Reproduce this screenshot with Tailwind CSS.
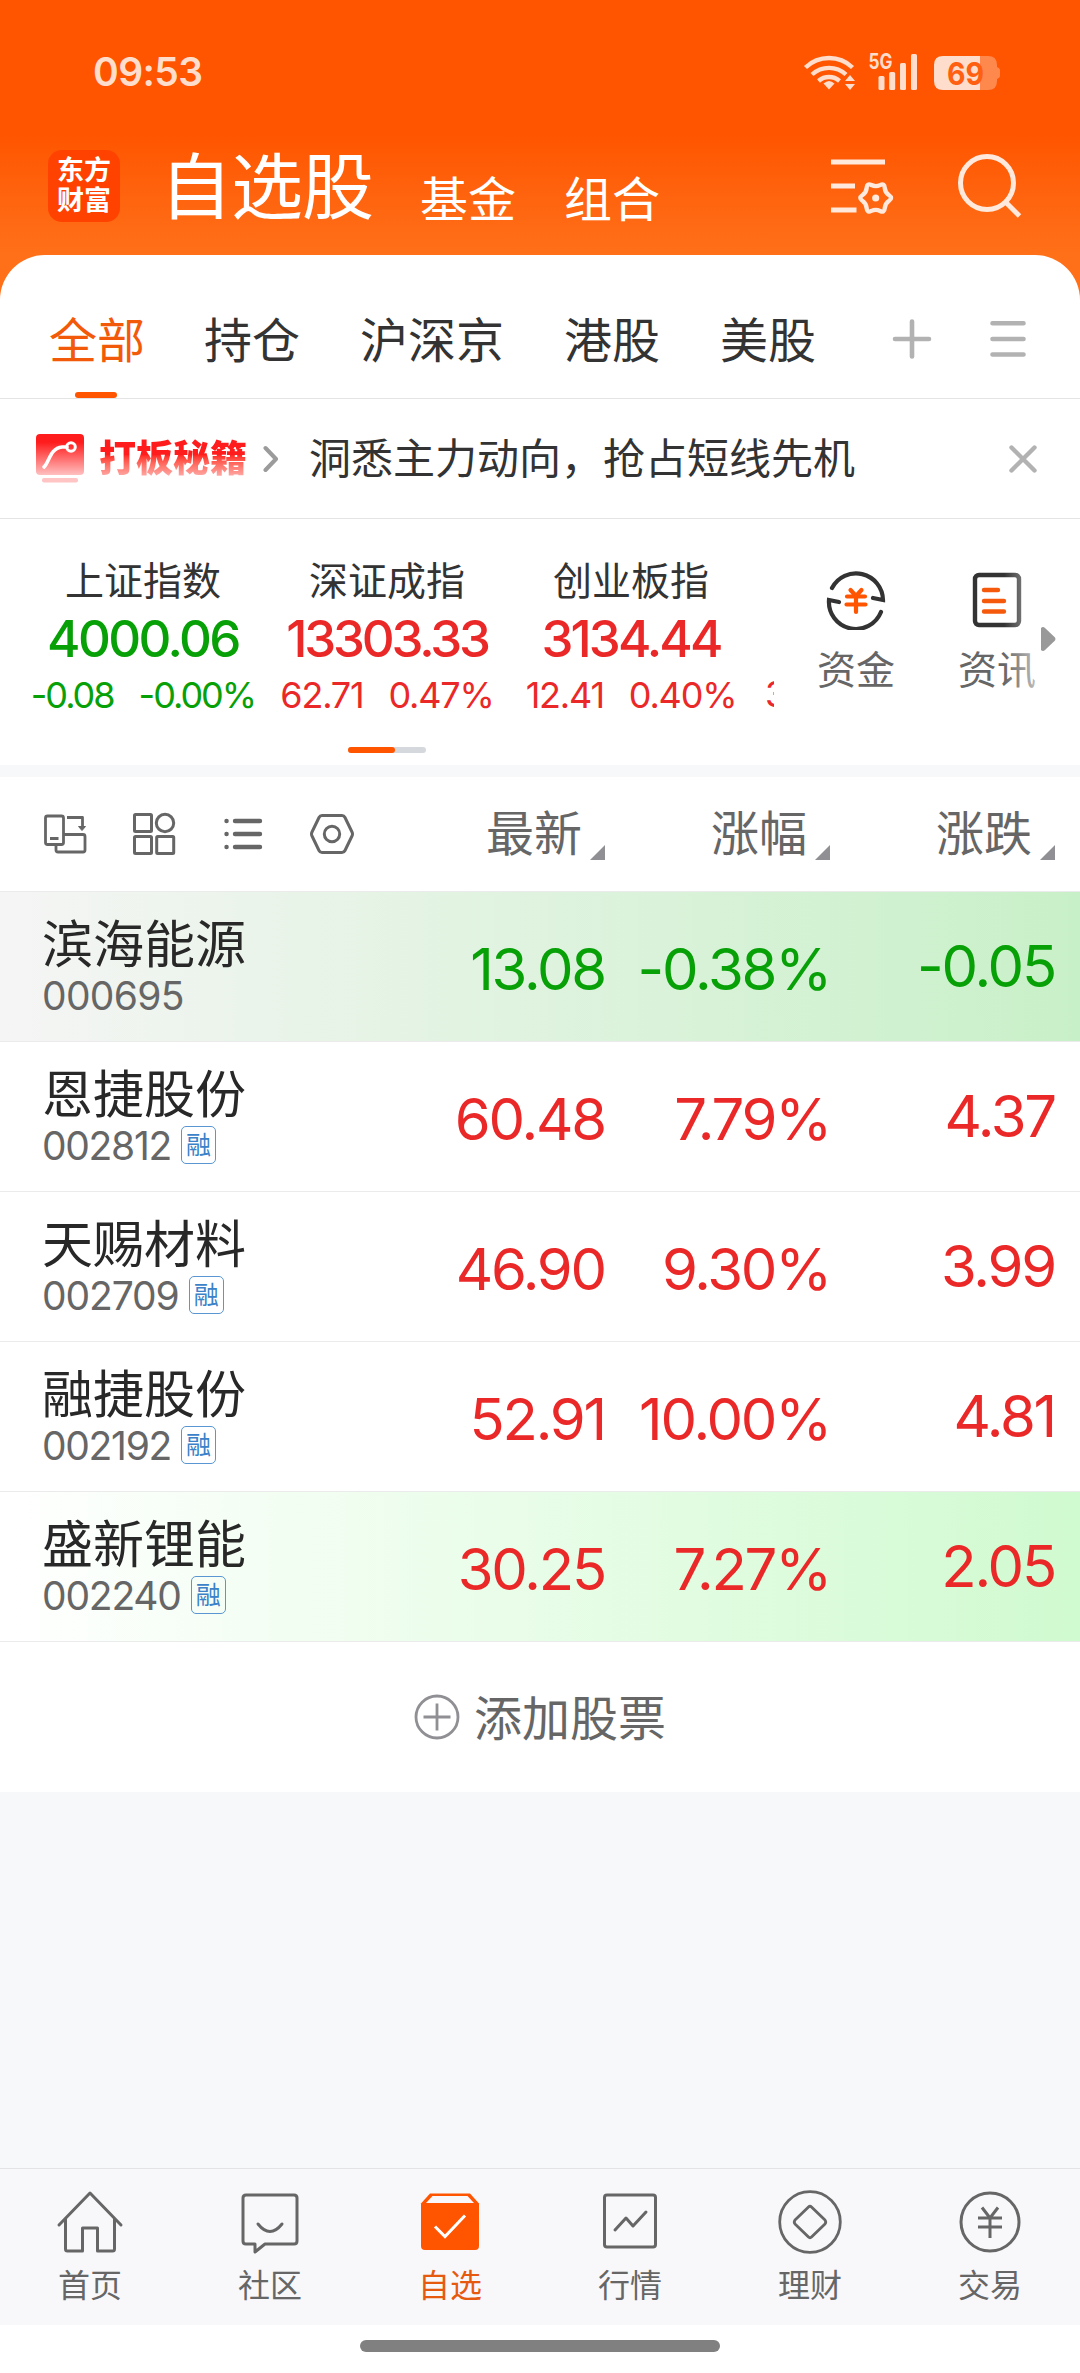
<!DOCTYPE html>
<html lang="zh-CN">
<head>
  <meta charset="UTF-8" />
  <meta name="viewport" content="width=device-width, initial-scale=1.0" />
  <title>自选股</title>
  <script src="https://cdn.jsdelivr.net/npm/@tailwindcss/browser@4"></script>
  <style>
    body {
      font-family: 'Inter', 'Noto Sans CJK SC', sans-serif;
    }
  </style>
</head>

<body class="w-[1080px] h-[2373px] overflow-hidden bg-[#f7f8fa] text-[#333] whitespace-nowrap leading-none">
  <div class="flex flex-col h-full">

    <!-- 顶部 -->
    <header class="h-[300px] -mb-[45px] bg-linear-to-b from-[#ff5500] from-45% to-[#ff7018] to-85%">
      <div class="h-[142px] pl-[93px] pr-[79px] flex items-center justify-between">
        <span class="text-[39px] font-semibold text-[#ffddcc] tracking-[-0.6px]">09:53</span>
        <svg width="198" height="40" viewBox="803 51 198 40" fill="none">
          <g stroke="#ffddcc" stroke-width="4.4">
            <path d="M805.5 67.5a34 34 0 0 1 47 0" />
            <path d="M812 74.5a25 25 0 0 1 34 0" />
            <path d="M818.500 81a16 16 0 0 1 21 0" />
          </g>
          <path d="M823.500 83.500q5.500-5 11 0l-5.500 6z" fill="#ffddcc" />
          <path d="M845 81l5-6 5 6zM845 84h10l-5 6z" fill="#ffddcc" />
          <text x="868.500" y="69" font-size="21" font-weight="700" textLength="24" lengthAdjust="spacingAndGlyphs" fill="#ffddcc">5G</text>
          <g fill="#ffddcc">
            <rect x="878.500" y="76" width="6" height="14" rx="1.500" />
            <rect x="889.200" y="72" width="6" height="18" rx="1.500" />
            <rect x="900" y="63" width="6" height="27" rx="1.500" />
            <rect x="911" y="54" width="6" height="36" rx="1.500" />
          </g>
          <path d="M980 56h8q9 0 9 9v2q3 1 3 3v6q0 2-3 3v2q0 9-9 9h-8z" fill="#ff884d" />
          <path d="M980 56h-37q-9 0-9 9v16q0 9 9 9h37z" fill="#ffddcc" />
          <text x="947" y="84.500" font-size="31" font-weight="700" textLength="37" lengthAdjust="spacingAndGlyphs" fill="#ff5f10">69</text>
        </svg>
      </div>
      <div class="h-[88px] pl-12 pr-[58px] flex items-center">
        <div class="w-[72px] h-[72px] rounded-[14px] bg-[#ff4200] text-white text-[27px] font-bold flex flex-col items-center justify-center leading-[30px]">
          <span>东方</span>
          <span>财富</span>
        </div>
        <h1 class="ml-[40px] mt-[2px] text-[72px] tracking-[-1px] text-white">自选股</h1>
        <span class="ml-[47px] mt-[28px] text-[48px] text-white">基金</span>
        <span class="ml-[48px] mt-[28px] text-[48px] text-white">组合</span>
        <svg class="ml-auto" width="64" height="60" viewBox="831 157 64 60" fill="none" stroke="#ffe9dc" stroke-width="5">
          <path d="M831 163h54M831 187h24M831 211h25.500" />
          <g transform="translate(875.700 199) scale(.94)">
            <path stroke-width="4.600" d="M14.230-2.880Q18.500 0 14.230 2.880Q9.960 5.750 9.600 10.900Q9.250 16.020 4.600 13.760Q0 11.500-4.600 13.760Q-9.250 16.020-9.600 10.900Q-9.960 5.750-14.230 2.880Q-18.500 0-14.230-2.880Q-9.960-5.750-9.600-10.900Q-9.250-16.020-4.600-13.760Q0-11.500 4.600-13.760Q9.250-16.020 9.600-10.900Q9.960-5.750 14.230-2.880Z" />
            <circle r="3.800" fill="#ffe9dc" stroke="none" />
          </g>
        </svg>
        <svg class="ml-[61px]" width="66" height="66" viewBox="956 154 66 66" fill="none" stroke="#ffe9dc" stroke-width="5">
          <circle cx="987" cy="184" r="26.500" />
          <path d="M1005.500 203l14 14" />
        </svg>
      </div>
    </header>

    <main class="bg-white rounded-t-[45px]">
      <!-- 分组 -->
      <nav class="h-[144px] pt-[25px] pl-[49px] pr-[54px] border-b border-[#e4e4e4] flex text-[48px]">
        <div class="relative h-[118px] pt-[3px] flex items-center text-[#f25a0a]">全部
          <i class="absolute left-[26px] bottom-0 w-[42px] h-[6px] rounded-full bg-[#ff5500]"></i>
        </div>
        <span class="h-[118px] pt-[3px] ml-[59px] flex items-center">持仓</span>
        <span class="h-[118px] pt-[3px] ml-[60px] flex items-center">沪深京</span>
        <span class="h-[118px] pt-[3px] ml-[60px] flex items-center">港股</span>
        <span class="h-[118px] pt-[3px] ml-[60px] flex items-center">美股</span>
        <svg class="ml-auto mt-[39px]" width="40" height="40" viewBox="-20 -20 40 40" stroke="#b2b2b2" stroke-width="4.600" stroke-linecap="round">
          <path d="M-17 0h34M0-17.500v35" />
        </svg>
        <svg class="ml-[58px] mt-[39px]" width="36" height="40" viewBox="0 -20 36 40" stroke="#b2b2b2" stroke-width="4.600" stroke-linecap="round">
          <path d="M2.500-15.800h31M2.500 0h31M2.500 15.500h31" />
        </svg>
      </nav>

      <!-- 广告条 -->
      <section class="h-[120px] pl-9 pr-[43px] border-b border-[#e4e4e4] flex items-center">
        <svg width="48" height="50" viewBox="36 434 48 50" fill="none">
          <defs>
            <linearGradient id="red" x1="0" y1="0" x2="0" y2="1">
              <stop offset=".2" stop-color="#ff1c1c" />
              <stop offset="1" stop-color="#ffc0c0" />
            </linearGradient>
          </defs>
          <rect x="36" y="434" width="48" height="41" rx="4" fill="url(#red)" />
          <path d="M44 467c5-4 6-19 18-20h5" stroke="#fff" stroke-width="3.600" stroke-linecap="round" />
          <circle cx="71" cy="447" r="4.300" stroke="#fff" stroke-width="3" />
          <rect x="42" y="478" width="36" height="4.500" rx="2" fill="#ffc4c4" />
        </svg>
        <span class="ml-[15px] text-[37px] leading-[44px] font-black text-transparent bg-clip-text bg-linear-to-b from-[#ff1c1c] from-40% to-[#ffb4b4] to-95%">打板秘籍</span>
        <svg class="ml-[16px]" width="16" height="30" viewBox="0 0 16 30" fill="none" stroke="#9b9b9b" stroke-width="4" stroke-linecap="round" stroke-linejoin="round">
          <path d="M2.500 4l10.500 11-10.500 11" />
        </svg>
        <span class="ml-[30px] text-[42px]">洞悉主力动向，抢占短线先机</span>
        <svg class="ml-auto" width="28" height="30" viewBox="0 0 28 30" stroke="#b2b2b2" stroke-width="4.400" stroke-linecap="round">
          <path d="M2.500 3.500l23 23M25.500 3.500l-23 23" />
        </svg>
      </section>

      <!-- 指数 -->
      <section class="relative h-[246px] flex">
        <div class="w-[774px] pl-[21px] flex overflow-hidden text-[#eb2828]">
          <div class="w-[244px] shrink-0 flex flex-col items-center text-[#07a007]">
            <span class="mt-[42px] text-[39px] text-[#333]">上证指数</span>
            <b class="mt-[13px] text-[51px] font-medium tracking-[-2.600px]">4000.06</b>
            <p class="mt-[13px] flex gap-[25px] text-[36px] tracking-[-2px]"><span>-0.08</span><span>-0.00%</span></p>
          </div>
          <div class="w-[244px] shrink-0 flex flex-col items-center">
            <span class="mt-[42px] text-[39px] text-[#333]">深证成指</span>
            <b class="mt-[13px] text-[51px] font-medium tracking-[-3.200px]">13303.33</b>
            <p class="mt-[13px] flex gap-[25px] text-[36px] tracking-[-1.200px]"><span>62.71</span><span>0.47%</span></p>
          </div>
          <div class="w-[244px] shrink-0 flex flex-col items-center">
            <span class="mt-[42px] text-[39px] text-[#333]">创业板指</span>
            <b class="mt-[13px] text-[51px] font-medium tracking-[-2.900px]">3134.44</b>
            <p class="mt-[13px] flex gap-[25px] text-[36px] tracking-[-1.200px]"><span>12.41</span><span>0.40%</span></p>
          </div>
          <span class="ml-[12px] mt-[157px] shrink-0 text-[36px]">3</span>
        </div>
        <div class="w-[164px] pt-[51px] flex flex-col items-center text-[39px] text-[#666]">
          <svg width="60" height="60" viewBox="-30 -30 60 60" fill="none" stroke="#333" stroke-width="4.200">
            <path d="M-24-12A27 27 0 0 1 27 0L17-2" stroke-linecap="round" />
            <path d="M25 12A27 27 0 0 1-27 0L-17 2" stroke-linecap="round" />
            <path d="M-5.500-10L0-4l5.500-6M-9-3.500h18M-9.500 4.500h19M0-4v16" stroke="#ff5500" stroke-linecap="round" />
          </svg>
          <span class="mt-[20px]">资金</span>
        </div>
        <div class="w-[118px] pt-[51px] flex flex-col items-center text-[39px] text-[#666]">
          <svg width="60" height="60" viewBox="-30 -30 60 60" fill="none" stroke="#333" stroke-width="4.400" stroke-linecap="round">
            <rect x="-22" y="-25" width="44" height="50" rx="4" />
            <path d="M-13-10h14M-13 1h20M-13 11.500h20" stroke="#f55a0c" />
          </svg>
          <span class="mt-[20px]">资讯</span>
        </div>
        <i class="absolute left-[1004px] top-[40px] w-[34px] h-[150px] bg-linear-to-r from-white/0 to-white/60"></i>
        <svg class="absolute left-[1041px] top-[107px]" width="15" height="26" viewBox="0 0 15 26" fill="#999">
          <path d="M0 2Q2 0 4 2L14 11.500Q15 13 14 14.500L4 24Q2 26 0 24Z" />
        </svg>
        <div class="absolute left-[348px] top-[228px] w-[78px] h-[6px] rounded-full bg-[#d5d8dc]">
          <div class="w-[47px] h-[6px] rounded-full bg-[#ff5500]"></div>
        </div>
      </section>

      <div class="h-3 bg-[#f7f8fa]"></div>

      <!-- 表头 -->
      <section class="h-[114px] pl-[43px] flex items-center text-[48px] text-[#666]">
        <div class="w-[443px] flex items-center">
          <svg width="44" height="44" viewBox="43 812 44 44" fill="none" stroke="#666" stroke-width="2.800" stroke-linejoin="round">
            <rect x="45.500" y="816" width="18" height="28.500" rx="2" />
            <path d="M50 838.500h8.500M64 834.500h19q2 0 2 2v13.500q0 2-2 2h-25q-2 0-2-2v-5M67 817.500h15.500v10" />
            <path d="M78.500 826.500h7l-3.500 4z" fill="#666" stroke-width="1" />
          </svg>
          <svg class="ml-[45px]" width="44" height="44" viewBox="132 812 44 44" fill="none" stroke="#666" stroke-width="3">
            <rect x="134.500" y="814.500" width="17" height="17" rx="1" />
            <circle cx="165" cy="823" r="8.700" />
            <rect x="134.500" y="836.500" width="17" height="17" rx="1" />
            <rect x="156.700" y="836.500" width="17" height="17" rx="1" />
          </svg>
          <svg class="ml-[47px]" width="40" height="44" viewBox="223 812 40 44" stroke="#666" stroke-width="4.400" stroke-linecap="round">
            <path d="M226.500 821h.1M226.500 834h.1M226.500 847h.1M235 821h25M235 834h25M235 847h25" />
          </svg>
          <svg class="ml-[47px]" width="44" height="44" viewBox="310 812 44 44" fill="none" stroke="#666" stroke-width="3" stroke-linejoin="round">
            <path d="M322 815.500h20q2 0 3 2l7 14.500q1 2 0 4l-7 14.500q-1 2-3 2h-20q-2 0-3-2l-7-14.500q-1-2 0-4l7-14.500q1-2 3-2z" />
            <circle cx="332" cy="834" r="7.700" />
          </svg>
        </div>
        <div class="w-[225px] flex items-center gap-[8px]">最新<svg class="mt-[36px]" width="15" height="15" fill="#8f8f94"><path d="M15 0v15H0z" /></svg></div>
        <div class="w-[225px] flex items-center gap-[8px]">涨幅<svg class="mt-[36px]" width="15" height="15" fill="#8f8f94"><path d="M15 0v15H0z" /></svg></div>
        <div class="flex items-center gap-[8px]">涨跌<svg class="mt-[36px]" width="15" height="15" fill="#8f8f94"><path d="M15 0v15H0z" /></svg></div>
      </section>

      <!-- 股票列表 -->
      <ul class="text-[58px] tracking-[-2.200px] text-[#eb2828] border-t border-[#ebebeb]">
        <li class="h-[150px] pl-[42px] pr-[25px] border-b border-[#ebebeb] grid grid-cols-[338px_225px_225px_225px] items-center text-right text-[#07a007] bg-linear-to-r from-[#f5f5f5] to-[#c8f0c8]">
          <div class="text-left text-[#282828]">
            <p class="text-[51px] tracking-[0px]">滨海能源</p>
            <p class="mt-[6px] h-[38px] flex items-center text-[39px] tracking-[-0.700px] text-[#666]">000695</p>
          </div>
          <span class="pt-[4px]">13.08</span><span class="pt-[4px]">-0.38%</span><span class="-mt-[2px]">-0.05</span>
        </li>
        <li class="h-[150px] pl-[42px] pr-[25px] border-b border-[#ebebeb] grid grid-cols-[338px_225px_225px_225px] items-center text-right">
          <div class="text-left text-[#282828]">
            <p class="text-[51px] tracking-[0px]">恩捷股份</p>
            <p class="mt-[6px] h-[38px] flex items-center text-[39px] tracking-[-1.300px] text-[#666]">002812<span class="ml-[10px] w-[35px] h-[38px] border border-[#5a96d2] rounded-[5px] flex items-center justify-center text-[25px] tracking-[0px] text-[#3c82c8]">融</span></p>
          </div>
          <span class="pt-[4px]">60.48</span><span class="pt-[4px]">7.79%</span><span class="-mt-[2px]">4.37</span>
        </li>
        <li class="h-[150px] pl-[42px] pr-[25px] border-b border-[#ebebeb] grid grid-cols-[338px_225px_225px_225px] items-center text-right">
          <div class="text-left text-[#282828]">
            <p class="text-[51px] tracking-[0px]">天赐材料</p>
            <p class="mt-[6px] h-[38px] flex items-center text-[39px] tracking-[-1.100px] text-[#666]">002709<span class="ml-[10px] w-[35px] h-[38px] border border-[#5a96d2] rounded-[5px] flex items-center justify-center text-[25px] tracking-[0px] text-[#3c82c8]">融</span></p>
          </div>
          <span class="pt-[4px]">46.90</span><span class="pt-[4px]">9.30%</span><span class="-mt-[2px]">3.99</span>
        </li>
        <li class="h-[150px] pl-[42px] pr-[25px] border-b border-[#ebebeb] grid grid-cols-[338px_225px_225px_225px] items-center text-right">
          <div class="text-left text-[#282828]">
            <p class="text-[51px] tracking-[0px]">融捷股份</p>
            <p class="mt-[6px] h-[38px] flex items-center text-[39px] tracking-[-1.300px] text-[#666]">002192<span class="ml-[10px] w-[35px] h-[38px] border border-[#5a96d2] rounded-[5px] flex items-center justify-center text-[25px] tracking-[0px] text-[#3c82c8]">融</span></p>
          </div>
          <span class="pt-[4px]">52.91</span><span class="pt-[4px]">10.00%</span><span class="-mt-[2px]">4.81</span>
        </li>
        <li class="h-[150px] pl-[42px] pr-[25px] border-b border-[#ebebeb] grid grid-cols-[338px_225px_225px_225px] items-center text-right bg-linear-to-r from-white to-[#d0fad0]">
          <div class="text-left text-[#282828]">
            <p class="text-[51px] tracking-[0px]">盛新锂能</p>
            <p class="mt-[6px] h-[38px] flex items-center text-[39px] tracking-[-1.200px] text-[#666]">002240<span class="ml-[10px] w-[35px] h-[38px] border border-[#5a96d2] rounded-[5px] flex items-center justify-center text-[25px] tracking-[0px] text-[#3c82c8]">融</span></p>
          </div>
          <span class="pt-[4px]">30.25</span><span class="pt-[4px]">7.27%</span><span class="-mt-[2px]">2.05</span>
        </li>
      </ul>

      <button class="w-full h-[150px] flex items-center justify-center gap-[14px] text-[48px] text-[#666]">
        <svg width="46" height="46" viewBox="-23 -23 46 46" fill="none" stroke="#8f8f94" stroke-width="2.800">
          <circle r="21" />
          <path d="M-13.500 0h27M0-13.500v27" />
        </svg>
        <span class="pt-[3px]">添加股票</span>
      </button>
    </main>

    <!-- 底部导航 -->
    <footer class="mt-auto">
      <nav class="h-[157px] border-t border-[#e2e3e5] bg-[#f8f8fb] grid grid-cols-6 text-[32px] text-[#666] text-center">
        <div class="pt-[20px] flex flex-col items-center">
          <svg width="68" height="68" viewBox="-34 -32 68 68" fill="none" stroke="#666" stroke-width="3" stroke-linejoin="round" stroke-linecap="round">
            <path d="M-31 4L0-28 31 4M-24.500-2v30q0 2 2 2h15V7h15v23h15q2 0 2-2v-30" />
          </svg>
          <span class="mt-[13px]">首页</span>
        </div>
        <div class="pt-[20px] flex flex-col items-center">
          <svg width="68" height="68" viewBox="-34 -32 68 68" fill="none" stroke="#666" stroke-width="3" stroke-linejoin="round" stroke-linecap="round">
            <path d="M-24-26h48q3 0 3 3v43q0 3-3 3H-5l-10 8v-8h-9q-3 0-3-3v-43q0-3 3-3z" />
            <path d="M-12 3q12 15 24 0" />
          </svg>
          <span class="mt-[13px]">社区</span>
        </div>
        <div class="pt-[20px] flex flex-col items-center text-[#e65a10]">
          <svg width="68" height="68" viewBox="-34 -32 68 68" fill="none">
            <path d="M-29-17.500L-20-27.500h40l9 10V25q0 4-4 4h-50q-4 0-4-4z" fill="#ff5500" />
            <path d="M-24-18l6.500-7h35l6.500 7z" fill="#f8f8fb" />
            <path d="M-15 5.500L-5 15.500 15-5.500" stroke="#fff" stroke-width="3" />
          </svg>
          <span class="mt-[13px]">自选</span>
        </div>
        <div class="pt-[20px] flex flex-col items-center">
          <svg width="68" height="68" viewBox="-34 -32 68 68" fill="none" stroke="#666" stroke-width="3" stroke-linejoin="round" stroke-linecap="round">
            <rect x="-25.500" y="-26" width="51" height="52" rx="2.500" />
            <path d="M-15 9L-4-3 3 5 16-9" />
          </svg>
          <span class="mt-[13px]">行情</span>
        </div>
        <div class="pt-[20px] flex flex-col items-center">
          <svg width="68" height="68" viewBox="-34 -32 68 68" fill="none" stroke="#666" stroke-width="2.800" stroke-linejoin="round">
            <circle cy="1" r="30.300" />
            <path d="M-1.500-14q1.500-1.500 3 0L15-1q1.500 2 0 4L1.500 16q-1.500 1.500-3 0L-15 3q-1.500-2 0-4z" />
          </svg>
          <span class="mt-[13px]">理财</span>
        </div>
        <div class="pt-[20px] flex flex-col items-center">
          <svg width="68" height="68" viewBox="-34 -32 68 68" fill="none" stroke="#666" stroke-width="3">
            <circle cy="1" r="29" />
            <path d="M-8-13.500L0-3l8-10.500M-12-3h24M-12 6h24M0-3v20" />
          </svg>
          <span class="mt-[13px]">交易</span>
        </div>
      </nav>
      <div class="h-12 pt-[15px] bg-white">
        <div class="mx-auto w-[360px] h-3 rounded-full bg-[#808080]"></div>
      </div>
    </footer>
  </div>
</body>
</html>
